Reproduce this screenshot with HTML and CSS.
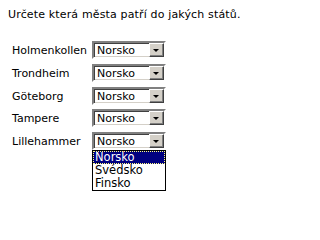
FILE: index.html
```html
<!DOCTYPE html>
<html>
<head>
<meta charset="utf-8">
<link rel="stylesheet" href="styles.css">
</head>
<body>
<p class="title">Určete která města patří do jakých států.</p>
<div class="form">
  <div class="label">Holmenkollen</div>
  <div class="cell"><div class="combo"><span class="value">Norsko</span><span class="btn"><span class="arrow"></span></span></div></div>
  <div class="label">Trondheim</div>
  <div class="cell"><div class="combo"><span class="value">Norsko</span><span class="btn"><span class="arrow"></span></span></div></div>
  <div class="label">Göteborg</div>
  <div class="cell"><div class="combo"><span class="value">Norsko</span><span class="btn"><span class="arrow"></span></span></div></div>
  <div class="label">Tampere</div>
  <div class="cell"><div class="combo"><span class="value">Norsko</span><span class="btn"><span class="arrow"></span></span></div></div>
  <div class="label">Lillehammer</div>
  <div class="cell"><div class="combo"><span class="value">Norsko</span><span class="btn"><span class="arrow"></span></span></div>
    <div class="list">
      <div class="item sel">Norsko</div>
      <div class="item">Švédsko</div>
      <div class="item">Finsko</div>
    </div>
  </div>
</div>
</body>
</html>
```
FILE: styles.css
```css
html, body {
  background: #ffffff;
}
body {
  margin: 8px;
  font-family: "DejaVu Sans", Verdana, sans-serif;
  font-size: 11px;
  color: #000000;
}
.title {
  margin: 0;
  line-height: 13px;
  letter-spacing: 0.15px;
}
.form {
  margin: 20px 0 0 4px;
  display: grid;
  grid-template-columns: 80px 74px;
  row-gap: 4.75px;
  align-items: start;
}
.label {
  line-height: 13px;
  padding-top: 3px;
}
.combo {
  box-sizing: border-box;
  width: 74px;
  height: 18px;
  border-style: solid;
  border-width: 2px;
  border-color: #808080 #ffffff #ffffff #808080;
  box-shadow: inset 1px 1px 0 #404040, inset -1px -1px 0 #d4d0c8;
  background: #ffffff;
  display: flex;
}
.value {
  flex: 1;
  padding: 1px 0 0 3px;
  line-height: 13px;
}
.btn {
  box-sizing: border-box;
  width: 15px;
  height: 14px;
  background: #d4d0c8;
  border: 1px solid;
  border-color: #ffffff #404040 #404040 #ffffff;
  box-shadow: inset -1px -1px 0 #808080;
  display: flex;
  align-items: center;
  justify-content: center;
}
.arrow {
  width: 0;
  height: 0;
  border-left: 3px solid transparent;
  border-right: 3px solid transparent;
  border-top: 3px solid #000000;
  margin: 1px 1px 0 0;
}
.list {
  width: 74px;
  box-sizing: border-box;
  background: #ffffff;
  border: 1px solid #000000;
}
.item {
  height: 13px;
  line-height: 13px;
  padding-left: 2px;
  font-size: 11.5px;
}
.sel {
  background: #000080;
  color: #ffffff;
  outline: 1px dotted #ffff80;
  outline-offset: -1px;
}
```
